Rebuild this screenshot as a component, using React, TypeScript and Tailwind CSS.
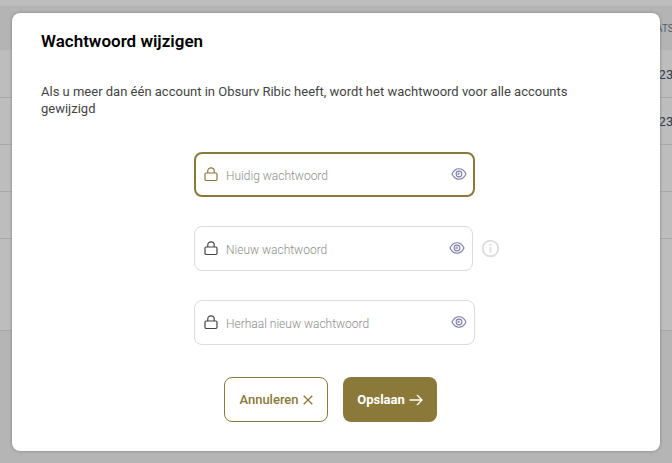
import React, { useState } from "react";

function LockIcon({ className }: { className: string }) {
  return (
    <svg className={className} width="14" height="16" viewBox="0 0 14 16" fill="none" stroke="currentColor" strokeWidth="1.2" aria-hidden="true">
      <rect x="1" y="6" width="12" height="7.5" rx="1.2" />
      <path d="M3.8 6V3.800a3.200 3 0 0 1 6.400 0V6" />
    </svg>
  );
}

function EyeIcon() {
  return (
    <svg width="16" height="12" viewBox="0 0 16 12" fill="none" stroke="currentColor" strokeWidth="1.1" aria-hidden="true">
      <path d="M1 6C2.8 2.5 5.2 .8 8 .8S13.200 2.500 15 6c-1.800 3.500-4.200 5.200-7 5.200S2.800 9.500 1 6z" />
      <circle cx="8" cy="6" r="2.900" />
      <path d="M8 4.400v1.700H6.400" />
    </svg>
  );
}

type FieldProps = { id: string; label: string; active?: boolean; info?: boolean };

function PasswordField({ id, label, active, info }: FieldProps) {
  const [visible, setVisible] = useState(false);
  return (
    <div className="flex items-center">
      <div
        className={
          "flex h-[45px] shrink-0 items-center rounded-lg bg-white " +
          (info ? "w-[279px] " : "w-[281px] ") +
          (active ? "border-2 border-[#8b793a] pr-1.5 pl-2" : "border border-[#dcdcdc] pr-[7px] pl-[9px]")
        }
      >
        <label htmlFor={id} className="flex shrink-0">
          <span className="sr-only">{label}</span>
          <LockIcon className={active ? "text-[#8b793a]" : "text-[#444444]"} />
        </label>
        <input
          id={id}
          type={visible ? "text" : "password"}
          placeholder={label}
          className="ml-2 h-10 min-w-0 flex-1 bg-transparent pt-0.5 font-['Roboto',sans-serif] text-xs font-light text-[#333333] outline-none placeholder:text-[#8c8c8c]"
        />
        <button
          type="button"
          aria-label="Wachtwoord tonen"
          onClick={() => setVisible(!visible)}
          className="flex shrink-0 pb-0.5 text-[#7c7ca8]"
        >
          <EyeIcon />
        </button>
      </div>
      {info && (
        <button type="button" aria-label="Informatie" className="ml-2 shrink-0 text-[#dcdcdc]">
          <svg width="19" height="19" viewBox="0 0 19 19" fill="none" stroke="currentColor" strokeWidth="1.800" aria-hidden="true">
            <circle cx="9.500" cy="9.500" r="7.800" />
            <path d="M9.500 8.200v5.300M9.500 5v1.800" />
          </svg>
        </button>
      )}
    </div>
  );
}

function AccountTable() {
  return (
    <table className="w-full table-fixed border-collapse text-left text-[13px] text-[#303848]">
      <thead>
        <tr className="h-11 bg-[#b4b4b4]">
          <th />
          <th className="w-7 p-0 text-[10px] font-normal whitespace-nowrap text-[#555b70]">LAATST</th>
        </tr>
      </thead>
      <tbody>
        {["2023-", "2023-", "", ""].map((date, i) => (
          <tr key={i} className="h-[47px] border-b border-[#a8a8a8] bg-[#bdbdbd]">
            <td />
            <td className="p-0 pt-0.5 whitespace-nowrap">{date}</td>
          </tr>
        ))}
        <tr className="h-[92px] border-b border-[#a8a8a8] bg-[#bdbdbd]">
          <td />
          <td />
        </tr>
      </tbody>
    </table>
  );
}

export default function App() {
  return (
    <div className="relative min-h-screen overflow-hidden bg-[#b5b5b5] font-['Roboto',sans-serif]">
      <div className="absolute inset-0 overflow-hidden">
        <div className="h-1.5 bg-[#bdbdbd]" />
        <AccountTable />
      </div>
      <main className="relative px-3 py-[13px]">
        <section role="dialog" aria-labelledby="title" className="rounded-lg bg-white px-[29px] pt-4 pb-[29px] shadow-[0_0_3px_#777777]">
          <h1 id="title" className="text-[17px] leading-6 font-semibold text-black">Wachtwoord wijzigen</h1>
          <p className="mt-[30px] pr-12 text-[13px] leading-[17px] text-[#444444]">
            Als u meer dan één account in Obsurv Ribic heeft, wordt het wachtwoord voor alle accounts gewijzigd
          </p>
          <form onSubmit={(e) => e.preventDefault()} className="mt-[35px]">
            <div className="mx-auto flex w-[284px] flex-col gap-[29px]">
              <PasswordField id="current" label="Huidig wachtwoord" active />
              <PasswordField id="new" label="Nieuw wachtwoord" info />
              <PasswordField id="repeat" label="Herhaal nieuw wachtwoord" />
            </div>
            <div className="mx-auto mt-8 flex w-[224px] gap-[15px]">
              <button type="button" className="flex h-[45px] w-[104px] shrink-0 items-center justify-center gap-1 rounded-lg border border-[#8b793a] text-[13px] font-medium text-[#8b793a]">
                Annuleren
                <svg width="10" height="10" viewBox="0 0 10 10" fill="none" stroke="currentColor" strokeWidth="1.300" aria-hidden="true">
                  <path d="M.7.7l8.600 8.600M9.300.7L.7 9.300" />
                </svg>
              </button>
              <button type="submit" className="flex h-[45px] w-[94px] shrink-0 items-center justify-center gap-1 rounded-lg bg-[#8b793a] text-[13px] font-bold text-white">
                Opslaan
                <svg width="14" height="12" viewBox="0 0 14 12" fill="none" stroke="currentColor" strokeWidth="1.300" aria-hidden="true">
                  <path d="M.5 6h12.500M8 1l5 5-5 5" />
                </svg>
              </button>
            </div>
          </form>
        </section>
      </main>
    </div>
  );
}
